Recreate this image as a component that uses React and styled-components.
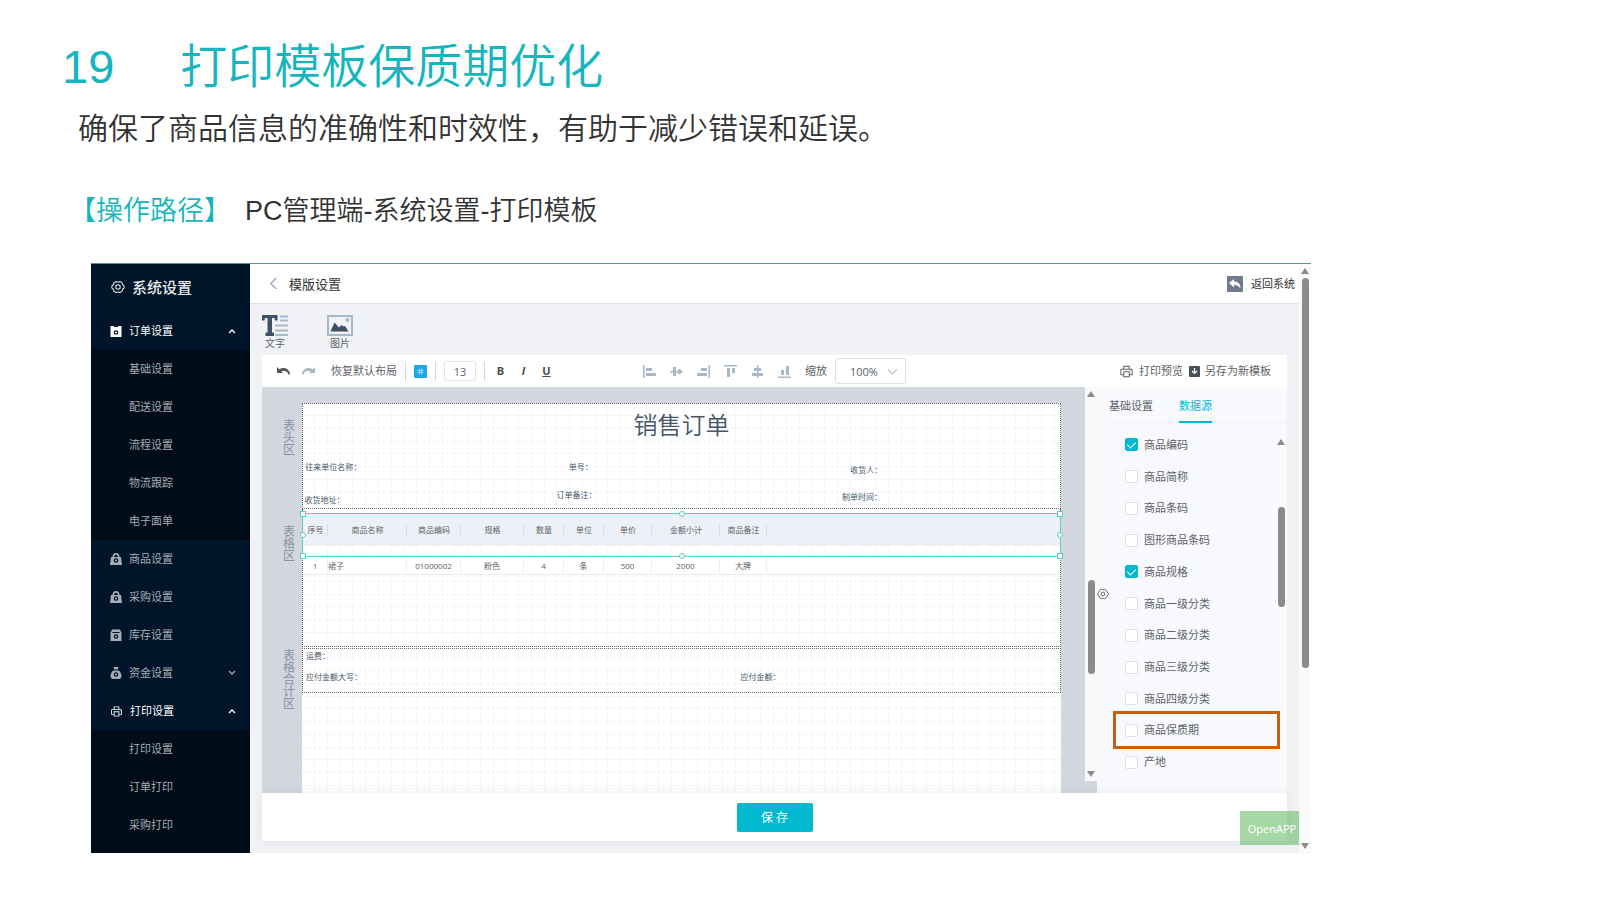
import React from 'react'
import styled, { createGlobalStyle } from 'styled-components'
import { AiOutlinePrinter } from 'react-icons/ai'

const Colors = {
    teal: '#15b5bf',
    cyan: '#00b9d0',
    select: '#5fd0bf',
    navy: '#001529',
    navyDark: '#000c17',
    ink: '#333333',
    text: '#606266',
    slate: '#475669',
    grey: '#d2d6df',
    thumb: '#8b8b8b',
    light: '#f0f2f6',
    gridLine: '#f5f6fb',
}

const GlobalStyle = createGlobalStyle`
    * {
        box-sizing: border-box;
    }
    body {
        margin: 0;
        background: #fff;
        font-family: 'Liberation Sans', 'Noto Sans CJK SC', sans-serif;
    }
    button, input, select {
        font-family: inherit;
        margin: 0;
        padding: 0;
    }
    button {
        border: 0;
        background: none;
        color: inherit;
        cursor: pointer;
    }
    a {
        color: inherit;
        text-decoration: none;
    }
    svg {
        display: block;
        flex: none;
    }
`

/* ---------- slide ---------- */

const Slide = styled.main`
    padding: 31px 289px 40px 62px;
`
const Title = styled.h1`
    display: flex;
    gap: 66px;
    margin: 0;
    font-size: 47px;
    font-weight: 350;
    line-height: 72px;
    color: ${Colors.teal};
`
const Lead = styled.p`
    margin: 2px 0 0 16px;
    font-size: 30px;
    font-weight: 350;
    line-height: 48px;
    color: ${Colors.ink};
`
const Path = styled.p`
    display: flex;
    gap: 14px;
    margin: 37px 0 0 7px;
    font-size: 27px;
    font-weight: 350;
    line-height: 42px;
    color: ${Colors.ink};
`
const PathLabel = styled.span`
    color: ${Colors.teal};
`

/* ---------- window ---------- */

const Window = styled.section`
    display: flex;
    margin: 31px 0 0 29px;
    border-top: 1px solid #6b8d92;
    font-family: 'Open Sans', 'Noto Sans CJK SC', sans-serif;
    font-size: 11px;
    line-height: 16px;
    color: ${Colors.text};
`
const Sidebar = styled.nav`
    width: 159px;
    flex: none;
    padding-bottom: 9px;
    background: ${Colors.navyDark};
    color: #a6adb4;
`
const SideTitle = styled.h2`
    display: flex;
    align-items: center;
    gap: 7px;
    height: 48px;
    margin: 0;
    padding: 0 0 2px 20px;
    background: ${Colors.navy};
    font-size: 15px;
    font-weight: 500;
    color: #e8eaec;
`
const SideItem = styled.a`
    display: flex;
    align-items: center;
    gap: 7px;
    height: 38px;
    padding: 0 14px 0 19px;
    background: ${Colors.navy};
    color: ${p => (p.$open ? '#fff' : 'inherit')};
`
const SideLabel = styled.span`
    flex: 1;
`
const SideSub = styled.a`
    display: flex;
    align-items: center;
    height: 38px;
    padding-left: 38px;
`
const Main = styled.div`
    flex: 1;
    min-width: 0;
    display: flex;
    flex-direction: column;
    background: ${Colors.light};
`
const TopBar = styled.header`
    display: flex;
    align-items: center;
    justify-content: space-between;
    height: 40px;
    padding: 0 4px 0 18px;
    background: #fff;
    border-bottom: 1px solid #dfe2e7;
    color: ${Colors.ink};
`
const BackButton = styled.button`
    display: flex;
    align-items: center;
    gap: 10px;
    font-size: 13px;
    line-height: 20px;
`
const ReturnLink = styled.a`
    display: flex;
    align-items: center;
    gap: 8px;
`
const Editor = styled.div`
    flex: 1;
    display: flex;
    flex-direction: column;
    padding: 0 12px;
`
const Inserts = styled.div`
    display: flex;
    gap: 39px;
    height: 51px;
    padding-top: 10px;
`
const InsertButton = styled.button`
    display: flex;
    flex-direction: column;
    align-items: flex-start;
    width: 26px;
    font-size: 10px;
    line-height: 14px;
    white-space: nowrap;
    span {
        padding-left: 3px;
    }
`
const Toolbar = styled.div`
    display: flex;
    align-items: center;
    height: 32px;
    padding: 0 16px 0 15px;
    background: #fff;
`
const ToolGroup = styled.div`
    display: flex;
    align-items: center;
    gap: ${p => p.$gap}px;
    margin-left: ${p => p.$push || 0}px;
`
const Spring = styled.div`
    flex: 1;
`
const ToolButton = styled.button`
    display: flex;
    align-items: center;
    gap: 5px;
    font-size: 11px;
    line-height: 16px;
    white-space: nowrap;
`
const FormatButton = styled(ToolButton)`
    justify-content: center;
    width: 11px;
    font-weight: 700;
    color: #4a4a4a;
    font-style: ${p => (p.$italic ? 'italic' : 'normal')};
    text-decoration: ${p => (p.$underline ? 'underline' : 'none')};
`
const Divider = styled.i`
    width: 1px;
    height: 19px;
    background: #cfd8e2;
`
const SizeInput = styled.input`
    width: 32px;
    height: 20px;
    border: 1px solid #e2e4e9;
    border-radius: 2px;
    text-align: center;
    font-size: 11px;
    color: ${Colors.text};
`
const ZoomLabel = styled.label`
    display: flex;
    align-items: center;
    gap: 8px;
    position: relative;
    svg {
        position: absolute;
        right: 9px;
    }
`
const ZoomSelect = styled.select`
    appearance: none;
    width: 71px;
    height: 26px;
    padding-left: 14px;
    border: 1px solid #dcdfe6;
    border-radius: 3px;
    background: #fff;
    font-size: 11px;
    color: ${Colors.text};
`

/* ---------- work area ---------- */

const Work = styled.div`
    flex: 1;
    display: flex;
    background: ${Colors.grey};
`
const Board = styled.div`
    flex: 1;
    display: flex;
    padding: 16px 24px 0 0;
`
const ZoneNames = styled.div`
    width: 40px;
    flex: none;
`
const ZoneName = styled.div`
    height: ${p => p.$height}px;
    padding-top: ${p => p.$top}px;
    padding-left: 21px;
    width: 34px;
    font-size: 12px;
    line-height: 12px;
    color: #8592a3;
    word-break: break-all;
`
const Paper = styled.div`
    flex: 1;
    background-color: #fff;
    background-image:
        linear-gradient(90deg, ${Colors.gridLine} 1px, transparent 1px 13px, ${Colors.gridLine} 13px 14px, transparent 14px 26px, ${Colors.gridLine} 26px 27px, transparent 27px 38px, ${Colors.gridLine} 38px 39px, transparent 39px),
        linear-gradient(${Colors.gridLine} 1px, transparent 1px 13px, ${Colors.gridLine} 13px 14px, transparent 14px 26px, ${Colors.gridLine} 26px 27px, transparent 27px 38px, ${Colors.gridLine} 38px 39px, transparent 39px);
    background-size: 51px 51px;
    background-position: 12px 12px;
`
const Zone = styled.div`
    position: relative;
    height: ${p => p.$height}px;
    border: 1px dotted #666;
`
const TableZone = styled(Zone)`
    border-top: 0;
    padding-top: 5px;
    margin-bottom: 1px;
`
const PaperTitle = styled.h3`
    margin: 3px 0 0;
    text-align: center;
    font-size: 24px;
    font-weight: 350;
    line-height: 36px;
    color: ${Colors.slate};
`
/* print fields are dropped anywhere on the sheet */
const Field = styled.span`
    position: absolute;
    left: ${p => p.$x}%;
    top: ${p => p.$y}px;
    font-size: 8px;
    line-height: 12px;
    color: ${Colors.slate};
    white-space: nowrap;
`
const OrderTable = styled.table`
    width: 100%;
    table-layout: fixed;
    border-spacing: 0;
    font-size: 8px;
    line-height: 12px;
    color: ${Colors.text};
    th, td {
        padding: 0;
        font-weight: 400;
        text-align: center;
        white-space: nowrap;
    }
    th {
        height: 44px;
        border-bottom: 12px solid transparent;
        background: linear-gradient(#d9dde8, #d9dde8) right center / 1px 12px no-repeat padding-box, #edf0f7 padding-box;
    }
    td {
        height: 17px;
        border-right: 1px solid #eceef4;
        border-bottom: 1px solid #e8eaf0;
        background: #fff;
    }
    td:nth-child(2) {
        text-align: left;
    }
    th:last-child {
        background: #edf0f7 padding-box;
    }
    td:last-child {
        border-right: 0;
    }
`
const Selection = styled.div`
    position: absolute;
    left: -1px;
    right: -1px;
    top: 4px;
    height: 44px;
    border: 1px solid ${Colors.select};
`
const Handle = styled.i`
    position: absolute;
    left: ${p => p.$x}%;
    top: ${p => p.$y}%;
    width: 6px;
    height: 6px;
    margin: -3px;
    border: 1px solid ${Colors.select};
    border-radius: ${p => (p.$round ? '50%' : 0)};
    background: #fff;
`

const ScrollTrack = styled.div`
    display: flex;
    flex-direction: column;
    align-items: center;
    width: 12px;
    flex: none;
    padding: 4px 0;
    margin: ${p => p.$margin || '0'};
    background: #fafafb;
`
const Thumb = styled.div`
    width: 7px;
    height: ${p => p.$height}px;
    margin-top: ${p => p.$top}px;
    border-radius: 4px;
    background: ${Colors.thumb};
`
const Arrow = styled.i`
    border: 4px solid transparent;
    border-top-width: ${p => (p.$down ? 6 : 0)}px;
    border-bottom-width: ${p => (p.$down ? 0 : 6)}px;
    border-top-color: ${Colors.thumb};
    border-bottom-color: ${Colors.thumb};
    margin-top: ${p => (p.$down ? 'auto' : 0)};
`

/* ---------- data source panel ---------- */

const Panel = styled.aside`
    width: 190px;
    flex: none;
    display: flex;
    background: #f8f9fd;
`
const PanelGear = styled.button`
    align-self: center;
    width: 12px;
    padding-top: 7px;
`
const PanelBody = styled.div`
    flex: 1;
    display: flex;
    flex-direction: column;
`
const Tabs = styled.div`
    display: flex;
    gap: 26px;
    height: 36px;
    border-bottom: 1px solid #eceff5;
`
const Tab = styled.button`
    height: 36px;
    padding-top: 2px;
    border-bottom: 2px solid ${p => (p.$active ? Colors.cyan : 'transparent')};
    font-size: 11px;
    color: ${p => (p.$active ? Colors.cyan : Colors.text)};
`
const Sources = styled.div`
    flex: 1;
    display: flex;
`
const SourceList = styled.div`
    flex: 1;
    display: flex;
    flex-direction: column;
    height: 349px;
    margin: 6px 0 15px 4px;
`
const Source = styled.label`
    flex: 1;
    display: flex;
    align-items: center;
    gap: 6px;
    padding-left: 12px;
    position: relative;
`
const Check = styled.input`
    appearance: none;
    display: flex;
    justify-content: center;
    width: 13px;
    height: 13px;
    border: 1px solid #dfe1e6;
    border-radius: 2px;
    background: #fff;
    &:checked {
        border-color: ${Colors.cyan};
        background: ${Colors.cyan};
    }
    &:checked::after {
        content: '';
        width: 4px;
        height: 7px;
        margin-top: 1px;
        border: solid #fff;
        border-width: 0 1px 1px 0;
        transform: rotate(45deg);
    }
`
const Callout = styled.div`
    position: absolute;
    top: -4px;
    bottom: -3px;
    left: 0;
    right: -5px;
    border: 3px solid #c55f11;
    z-index: 1;
    pointer-events: none;
`

const Footer = styled.footer`
    display: flex;
    align-items: center;
    justify-content: center;
    height: 48px;
    margin-bottom: 12px;
    background: #fff;
    box-shadow: 0 0 10px rgba(0, 0, 0, 0.07);
    z-index: 1;
`
const SaveButton = styled.button`
    width: 76px;
    height: 29px;
    border-radius: 2px;
    background: ${Colors.cyan};
    color: #fff;
    font-size: 12px;
`
const Content = styled.div`
    position: relative;
    flex: 1;
    min-width: 0;
    display: flex;
`
const OpenApp = styled.button`
    position: absolute;
    right: 12px;
    bottom: 8px;
    z-index: 2;
    width: 59px;
    height: 34px;
    padding-left: 5px;
    background: rgba(92, 184, 92, 0.55);
    color: #fff;
    font-size: 11px;
`

/* ---------- icons ---------- */

const Nut = ({ size = 12 }) => (
    <svg width={size} height={size} viewBox='0 0 24 24' fill='none' stroke='currentColor' strokeWidth='1.800' strokeLinejoin='round'>
        <path d='M8.500 2.500Q12 4.500 15.500 2.500L18.800 4.500Q19 8.500 22.500 10.200V13.800Q19 15.500 18.800 19.500L15.500 21.500Q12 19.500 8.500 21.500L5.200 19.500Q5 15.500 1.500 13.800V10.200Q5 8.500 5.200 4.500Z' />
        <circle cx='12' cy='12' r='3.800' />
    </svg>
)

const SideIcon = ({ type }) => {
    if (type === 'print') return <AiOutlinePrinter size={13} />
    const shapes = {
        order: 'M.500 1H4v1h4V1h3.500v11H.500z',
        bag: 'M1 4h1.500a3.500 4 0 0 1 7 0H11l1 8H0z',
        store: 'M2 .500h8L11.500 4v8H.500V4z',
        money: 'M3.500 0h5L7.500 3c3 1 4 4 4 6.500C11.500 11 10 12 9 12H3c-1 0-2.500-1-2.500-2.500C.500 7 1.500 4 4.500 3z',
    }
    return (
        <svg width='12' height='12' viewBox='0 0 12 12'>
            <path d={shapes[type]} fill='currentColor' />
            {type === 'bag' && <path d='M4.200 4a1.800 2.200 0 0 1 3.600 0z' fill={Colors.navy} />}
            {type === 'store' && <path d='M2.500 3.500h7' stroke={Colors.navy} />}
            {type === 'money' && <path d='M3.500 3h5' stroke={Colors.navy} />}
            <circle cx='6' cy='7.500' r='1.700' fill='none' stroke={Colors.navy} strokeWidth='1.200' />
        </svg>
    )
}

const Chevron = ({ d, size = 8, color = 'currentColor', width = 1.3 }) => (
    <svg width={size} height={size} viewBox='0 0 8 8' fill='none' stroke={color} strokeWidth={width}>
        <path d={d} />
    </svg>
)

const Undo = ({ color, flip }) => (
    <svg width='13' height='10' viewBox='0 0 13 10'>
        <path
            d='M0 1v6h6L4.300 5.300c3-1.300 6-.3 7.200 3.200H13C12.700 2.500 7 .300 2.300 3.200z'
            fill={color}
            transform={flip ? 'translate(13 0) scale(-1 1)' : undefined}
        />
    </svg>
)

const alignShapes = [
    ['M0 0h1.500v13H0z', 'M3 3h6v3H3zM3 8h10v3H3z'],
    ['M0 6h13v1.500H0z', 'M3 2h3v9H3zM8 4h3v5H8z'],
    ['M11.500 0H13v13h-1.500z', 'M4 3h6v3H4zM0 8h10v3H0z'],
    ['M0 0h13v1.500H0z', 'M3 3h3v9H3zM8 3h3v5H8z'],
    ['M6 0h1.500v13H6z', 'M3 3h7v3H3zM1 8h11v3H1z'],
    ['M0 11.500h13V13H0z', 'M3 5h3v5H3zM8 1h3v9H8z'],
]

const AlignIcon = ({ shape }) => (
    <svg width='13' height='13' viewBox='0 0 13 13' fill='#a9b8c8'>
        <path d={shape[0]} />
        <path d={shape[1]} />
    </svg>
)

/* ---------- data ---------- */

const menu = [
    { label: '订单设置', icon: 'order', open: true, items: ['基础设置', '配送设置', '流程设置', '物流跟踪', '电子面单'] },
    { label: '商品设置', icon: 'bag' },
    { label: '采购设置', icon: 'bag' },
    { label: '库存设置', icon: 'store' },
    { label: '资金设置', icon: 'money', closed: true },
    { label: '打印设置', icon: 'print', open: true, items: ['打印设置', '订单打印', '采购打印'] },
]

const columns = [
    ['序号', 25, '1'],
    ['商品名称', 79, '裙子'],
    ['商品编码', 54, '01000002'],
    ['规格', 63, '粉色'],
    ['数量', 40, '4'],
    ['单位', 40, '条'],
    ['单价', 48, '500'],
    ['金额小计', 68, '2000'],
    ['商品备注', 47, '大牌'],
]

const sources = [
    '商品编码', '商品简称', '商品条码', '图形商品条码', '商品规格', '商品一级分类',
    '商品二级分类', '商品三级分类', '商品四级分类', '商品保质期', '产地',
]
const checked = ['商品编码', '商品规格']

const handles = [
    [0, 0], [100, 0], [0, 100], [100, 100],
    [50, 0, true], [50, 100, true], [0, 50, true], [100, 50, true],
]

const SideMenu = () => (
    <Sidebar>
        <SideTitle><Nut size={14} />系统设置</SideTitle>
        {menu.map(group => (
            <React.Fragment key={group.label}>
                <SideItem href='#' $open={group.open}>
                    <SideIcon type={group.icon} />
                    <SideLabel>{group.label}</SideLabel>
                    {group.open && <Chevron d='M1 6l3-3 3 3' />}
                    {group.closed && <Chevron d='M1 2l3 3 3-3' />}
                </SideItem>
                {group.items && group.items.map(item => <SideSub href='#' key={item}>{item}</SideSub>)}
            </React.Fragment>
        ))}
    </Sidebar>
)

const EditorToolbar = () => (
    <Toolbar>
        <ToolGroup $gap={12}>
            <ToolButton aria-label='撤销'><Undo color='#555' /></ToolButton>
            <ToolButton aria-label='重做'><Undo color='#a9b8c8' flip /></ToolButton>
        </ToolGroup>
        <ToolGroup $gap={8} $push={16}>
            <ToolButton>恢复默认布局</ToolButton>
            <Divider />
            <ToolButton aria-label='网格'>
                <svg width='13' height='13' viewBox='0 0 13 13'>
                    <rect width='13' height='13' rx='1' fill='#1ea7e8' />
                    <path d='M3.500 5.500h6M3.500 7.500h6M5.500 3.500v6M7.500 3.500v6' stroke='#a5dcf7' strokeWidth='0.9' />
                </svg>
            </ToolButton>
            <Divider />
            <SizeInput aria-label='字号' defaultValue='13' />
            <Divider />
        </ToolGroup>
        <ToolGroup $gap={12} $push={10}>
            <FormatButton>B</FormatButton>
            <FormatButton $italic>I</FormatButton>
            <FormatButton $underline>U</FormatButton>
        </ToolGroup>
        <ToolGroup $gap={14} $push={91}>
            {alignShapes.map((shape, i) => (
                <ToolButton key={i} aria-label='对齐'><AlignIcon shape={shape} /></ToolButton>
            ))}
            <ZoomLabel>
                缩放
                <ZoomSelect defaultValue='100%'>
                    <option>100%</option>
                </ZoomSelect>
                <Chevron d='M0 2l4 4 4-4' size={9} color='#b4b8bf' width={0.9} />
            </ZoomLabel>
        </ToolGroup>
        <Spring />
        <ToolGroup $gap={6}>
            <ToolButton><AiOutlinePrinter size={15} />打印预览</ToolButton>
            <ToolButton>
                <svg width='11' height='11' viewBox='0 0 11 11'>
                    <rect width='11' height='11' rx='1' fill='#4a4f57' />
                    <path d='M5.500 2v5M3 5l2.500 2.500L8 5' fill='none' stroke='#fff' strokeWidth='1.200' />
                </svg>
                另存为新模板
            </ToolButton>
        </ToolGroup>
    </Toolbar>
)

const Sheet = () => (
    <Board>
        <ZoneNames>
            <ZoneName $height={105} $top={17}>表头区</ZoneName>
            <ZoneName $height={140} $top={18}>表格区</ZoneName>
            <ZoneName $height={44} $top={2}>表格合计区</ZoneName>
        </ZoneNames>
        <Paper>
            <Zone $height={106}>
                <PaperTitle>销售订单</PaperTitle>
                <Field $x={0.3} $y={57}>往来单位名称：</Field>
                <Field $x={35.1} $y={57}>单号：</Field>
                <Field $x={72.3} $y={60}>收货人：</Field>
                <Field $x={0.2} $y={90}>收货地址：</Field>
                <Field $x={33.5} $y={85}>订单备注：</Field>
                <Field $x={71.2} $y={87}>制单时间：</Field>
            </Zone>
            <TableZone $height={138}>
                <OrderTable>
                    <colgroup>
                        {columns.map(([name, width]) => <col key={name} width={width} />)}
                        <col />
                    </colgroup>
                    <thead>
                        <tr>
                            {columns.map(([name]) => <th key={name}>{name}</th>)}
                            <th />
                        </tr>
                    </thead>
                    <tbody>
                        <tr>
                            {columns.map(([name, , value]) => <td key={name}>{value}</td>)}
                            <td />
                        </tr>
                    </tbody>
                </OrderTable>
                <Selection>
                    {handles.map(([x, y, round]) => <Handle key={`${x}-${y}`} $x={x} $y={y} $round={round} />)}
                </Selection>
            </TableZone>
            <Zone $height={45}>
                <Field $x={0.4} $y={1}>运费：</Field>
                <Field $x={0.4} $y={22}>应付金额大写：</Field>
                <Field $x={57.8} $y={22}>应付金额：</Field>
            </Zone>
        </Paper>
    </Board>
)

const DataPanel = () => (
    <Panel>
        <PanelGear aria-label='设置'><Nut size={12} /></PanelGear>
        <PanelBody>
            <Tabs>
                <Tab>基础设置</Tab>
                <Tab $active>数据源</Tab>
            </Tabs>
            <Sources>
                <SourceList>
                    {sources.map(name => (
                        <Source key={name}>
                            <Check type='checkbox' defaultChecked={checked.includes(name)} />
                            {name}
                            {name === '商品保质期' && <Callout />}
                        </Source>
                    ))}
                </SourceList>
                <ScrollTrack $margin='12px 0 0'>
                    <Arrow />
                    <Thumb $height={100} $top={62} />
                </ScrollTrack>
            </Sources>
        </PanelBody>
    </Panel>
)

export default function App() {
    return (
        <Slide>
            <GlobalStyle />
            <Title><span>19</span><span>打印模板保质期优化</span></Title>
            <Lead>确保了商品信息的准确性和时效性，有助于减少错误和延误。</Lead>
            <Path><PathLabel>【操作路径】</PathLabel><span>PC管理端-系统设置-打印模板</span></Path>
            <Window>
                <SideMenu />
                <Content>
                    <Main>
                        <TopBar>
                            <BackButton>
                                <Chevron d='M6 0L2 4l4 4' size={11} color='#8fa3b8' width={0.9} />
                                模版设置
                            </BackButton>
                            <ReturnLink href='#'>
                                <svg width='16' height='16' viewBox='0 0 16 16'>
                                    <rect width='16' height='16' rx='1' fill='#717a8c' />
                                    <path d='M2 7l5-4v2.500c4 0 6.500 2 6.500 7C12 10 10 9 7 9v2.500z' fill='#fff' />
                                </svg>
                                返回系统
                            </ReturnLink>
                        </TopBar>
                        <Editor>
                            <Inserts>
                                <InsertButton>
                                    <svg width='26' height='22' viewBox='0 0 26 22'>
                                        <path d='M0 1h15.500v5.500H13L12.500 4H10v14.500h2V22H3.500v-3.500h2V4H3l-.5 2.500H0z' fill='#3f5166' />
                                        <path d='M18 2.500h8M18 6.500h8M13 11.500h13M13 16.500h13M13 21h13' stroke='#a9b8c8' strokeWidth='1.800' />
                                    </svg>
                                    <span>文字</span>
                                </InsertButton>
                                <InsertButton>
                                    <svg width='26' height='22' viewBox='0 0 26 22'>
                                        <rect x='1' y='2' width='24' height='19' fill='none' stroke='#a9b8c8' strokeWidth='2' />
                                        <path d='M3.500 17.500l4-9 4.500 5 2.500-2.500 2 1.500 1.500-.5 3.500 5.500z' fill='#3f5166' />
                                        <circle cx='20.500' cy='6' r='2' fill='#a9b8c8' />
                                    </svg>
                                    <span>图片</span>
                                </InsertButton>
                            </Inserts>
                            <EditorToolbar />
                            <Work>
                                <Sheet />
                                <ScrollTrack $margin='0 0 12px'>
                                    <Arrow />
                                    <Thumb $height={94} $top={183} />
                                    <Arrow $down />
                                </ScrollTrack>
                                <DataPanel />
                            </Work>
                            <Footer><SaveButton>保 存</SaveButton></Footer>
                        </Editor>
                    </Main>
                    <ScrollTrack>
                        <Arrow />
                        <Thumb $height={390} $top={4} />
                        <Arrow $down />
                    </ScrollTrack>
                    <OpenApp>OpenAPP</OpenApp>
                </Content>
            </Window>
        </Slide>
    )
}
